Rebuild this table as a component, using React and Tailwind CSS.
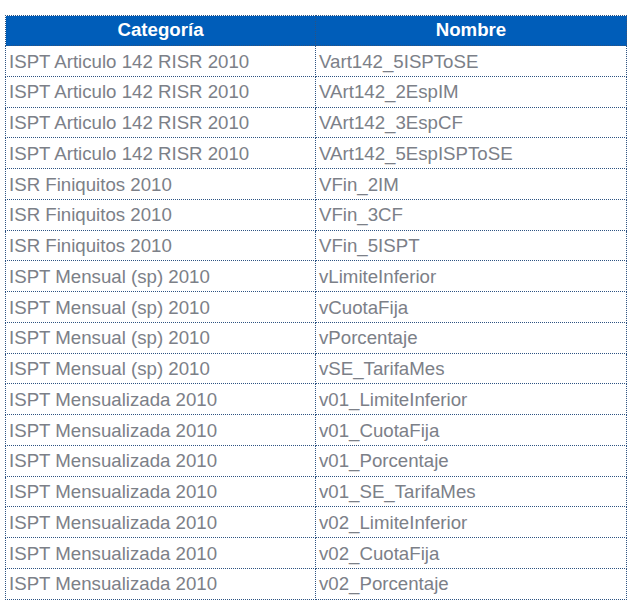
const rows = [
  ["ISPT Articulo 142 RISR 2010", "Vart142_5ISPToSE"],
  ["ISPT Articulo 142 RISR 2010", "VArt142_2EspIM"],
  ["ISPT Articulo 142 RISR 2010", "VArt142_3EspCF"],
  ["ISPT Articulo 142 RISR 2010", "VArt142_5EspISPToSE"],
  ["ISR Finiquitos 2010", "VFin_2IM"],
  ["ISR Finiquitos 2010", "VFin_3CF"],
  ["ISR Finiquitos 2010", "VFin_5ISPT"],
  ["ISPT Mensual (sp) 2010", "vLimiteInferior"],
  ["ISPT Mensual (sp) 2010", "vCuotaFija"],
  ["ISPT Mensual (sp) 2010", "vPorcentaje"],
  ["ISPT Mensual (sp) 2010", "vSE_TarifaMes"],
  ["ISPT Mensualizada 2010", "v01_LimiteInferior"],
  ["ISPT Mensualizada 2010", "v01_CuotaFija"],
  ["ISPT Mensualizada 2010", "v01_Porcentaje"],
  ["ISPT Mensualizada 2010", "v01_SE_TarifaMes"],
  ["ISPT Mensualizada 2010", "v02_LimiteInferior"],
  ["ISPT Mensualizada 2010", "v02_CuotaFija"],
  ["ISPT Mensualizada 2010", "v02_Porcentaje"],
];

export default function App() {
  return (
    <div className="min-h-screen bg-white pt-[15px] pl-[5px] font-['Liberation_Sans',Arial,sans-serif]">
      <table className="w-[622px] border-collapse table-fixed text-[18.67px] leading-none">
        <thead>
          <tr className="h-[30px] bg-[#005db9] text-white font-bold">
            <th className="w-[310px] border border-dotted border-[#2d5382] text-center">Categoría</th>
            <th className="border border-dotted border-[#2d5382] text-center">Nombre</th>
          </tr>
        </thead>
        <tbody className="text-[#7c8088]">
          {rows.map(([cat, name], i) => (
            <tr key={i} className="h-[30.75px]">
              <td className="border border-dotted border-[#2d5382] pl-[3px] pt-[2px] whitespace-nowrap">{cat}</td>
              <td className="border border-dotted border-[#2d5382] pl-[3px] pt-[2px] whitespace-nowrap">{name}</td>
            </tr>
          ))}
        </tbody>
      </table>
    </div>
  );
}
